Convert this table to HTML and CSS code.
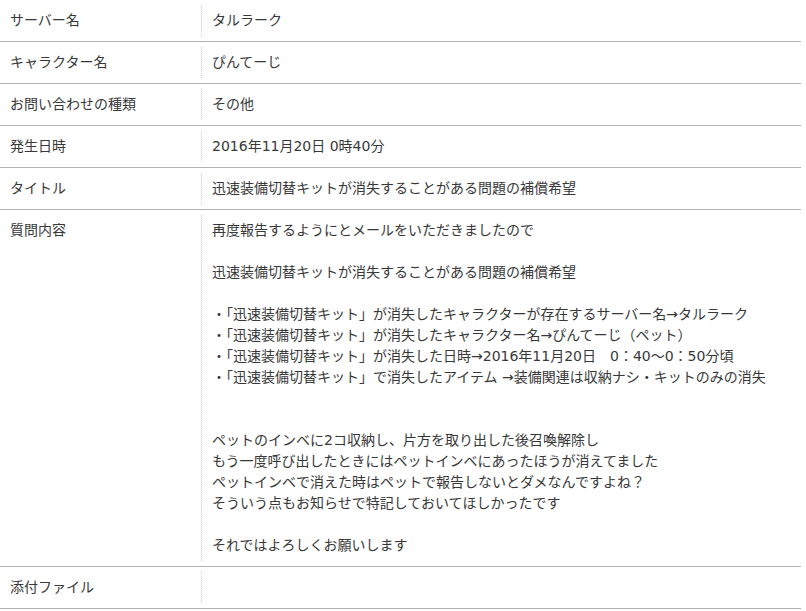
FILE: index.html
```html
<!DOCTYPE html>
<html lang="ja">
<head>
<meta charset="utf-8">
<link rel="stylesheet" href="styles.css">
</head>
<body>
<dl class="detail">
  <div class="row"><dt>サーバー名</dt><dd>タルラーク</dd></div>
  <div class="row"><dt>キャラクター名</dt><dd>ぴんてーじ</dd></div>
  <div class="row"><dt>お問い合わせの種類</dt><dd>その他</dd></div>
  <div class="row"><dt>発生日時</dt><dd>2016年11月20日 0時40分</dd></div>
  <div class="row"><dt>タイトル</dt><dd>迅速装備切替キットが消失することがある問題の補償希望</dd></div>
  <div class="row"><dt>質問内容</dt><dd class="body">再度報告するようにとメールをいただきましたので

迅速装備切替キットが消失することがある問題の補償希望

・「迅速装備切替キット」が消失したキャラクターが存在するサーバー名→タルラーク
・「迅速装備切替キット」が消失したキャラクター名→ぴんてーじ（ペット）
・「迅速装備切替キット」が消失した日時→2016年11月20日　0：40～0：50分頃
・「迅速装備切替キット」で消失したアイテム →装備関連は収納ナシ・キットのみの消失


ペットのインベに2コ収納し、片方を取り出した後召喚解除し
もう一度呼び出したときにはペットインベにあったほうが消えてました
ペットインベで消えた時はペットで報告しないとダメなんですよね？
そういう点もお知らせで特記しておいてほしかったです

それではよろしくお願いします</dd></div>
  <div class="row"><dt>添付ファイル</dt><dd></dd></div>
</dl>
</body>
</html>
```

FILE: styles.css
```css
html, body {
  margin: 0;
  padding: 0;
  background: #fff;
}
body {
  font-family: "DejaVu Sans", "Noto Sans CJK JP", sans-serif;
  font-size: 14px;
  line-height: 21px;
  color: #383838;
}
.detail {
  margin: 0;
  width: 801px;
}
.row {
  display: grid;
  grid-template-columns: 201px 1fr;
  border-bottom: 1px solid #b3b3b3;
}
.row dt {
  padding: 10px 10px;
}
.row dd {
  margin: 5px 0;
  padding: 5px 10px;
  border-left: 1px dotted #d0d0d0;
  min-height: 21px;
}
.row dd.body {
  white-space: pre-line;
}
```
